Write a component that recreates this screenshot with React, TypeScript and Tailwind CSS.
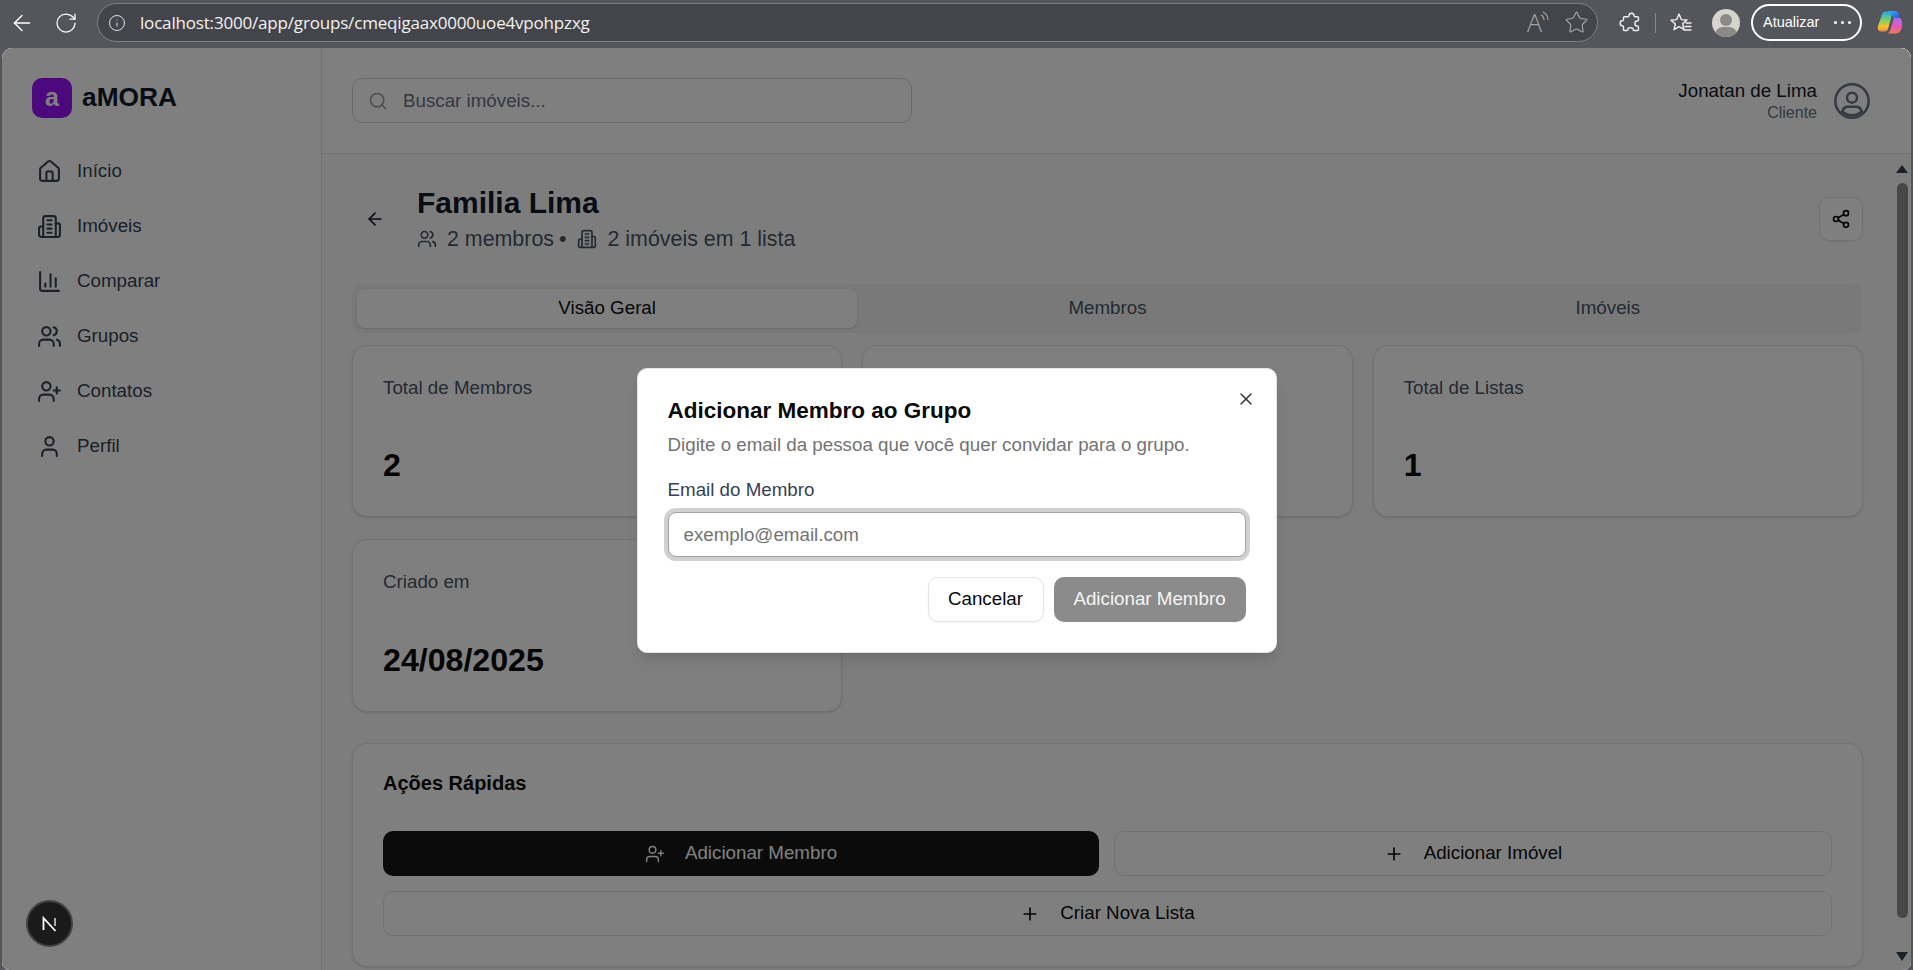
import { ArrowLeft, ChartColumn, House, Info, Plus, RotateCw, Search, Share2, Star, User, UserPlus, Users, X } from 'lucide-react';

const sans = { fontFamily: '"Liberation Sans", Arial, sans-serif' };

const navItems = [
  { label: 'Início', icon: House },
  { label: 'Imóveis', icon: Building },
  { label: 'Comparar', icon: ChartColumn },
  { label: 'Grupos', icon: Users },
  { label: 'Contatos', icon: UserPlus },
  { label: 'Perfil', icon: User },
];

// versao antiga do Building2, com as linhas no meio
function Building({ size = 24, className = '', strokeWidth = 2 }: { size?: number; className?: string; strokeWidth?: number }) {
  return (
    <svg width={size} height={size} viewBox="0 0 24 24" fill="none" stroke="currentColor" strokeWidth={strokeWidth} strokeLinecap="round" strokeLinejoin="round" className={className}>
      <path d="M6 22V4a2 2 0 0 1 2-2h8a2 2 0 0 1 2 2v18Z" />
      <path d="M6 12H4a2 2 0 0 0-2 2v6a2 2 0 0 0 2 2h2" />
      <path d="M18 9h2a2 2 0 0 1 2 2v9a2 2 0 0 1-2 2h-2" />
      <path d="M10 6h4" />
      <path d="M10 10h4" />
      <path d="M10 14h4" />
      <path d="M10 18h4" />
    </svg>
  );
}

function UserCircle() {
  return (
    <svg width="40" height="40" viewBox="0 0 24 24" fill="none" stroke="currentColor" strokeWidth="1.5" strokeLinecap="round" strokeLinejoin="round" className="text-gray-500">
      <circle cx="12" cy="12" r="10" />
      <circle cx="12" cy="10" r="3" />
      <path d="M6.2 18.2c.6-1.8 1.8-2.7 3.3-2.7h5c1.5 0 2.7.9 3.3 2.7" />
      <path d="M6.2 18.2c1.5 1.6 3.5 2.3 5.8 2.3s4.300-.7 5.800-2.300" />
    </svg>
  );
}

function Browser() {
  return (
    <div className="flex h-12 shrink-0 items-center pb-[3px] text-white" style={{ fontFamily: '"Open Sans", sans-serif' }}>
      <ArrowLeft size={26} strokeWidth={1.25} className="ml-[9px]" />
      <RotateCw size={24} strokeWidth={1.25} className="ml-[19px]" />
      <div className="ml-[19px] flex h-[39px] w-[1501px] items-center rounded-full border border-[#7f8085] bg-[#44454a] pl-[10px] pr-[8px]">
        <Info size={18} strokeWidth={1.25} className="text-[#e8e8e8]" />
        <span className="ml-[14px] text-[17px] tracking-[-0.18px] text-[#f2f2f2]">localhost:3000/app/groups/cmeqigaax0000uoe4vpohpzxg</span>
        <span className="ml-auto text-[25px] font-light leading-none text-[#a5a6a9]">A</span>
        <svg width="10" height="14" viewBox="0 0 10 14" fill="none" stroke="#a5a6a9" strokeWidth="1.1" className="mb-[10px] ml-[-2px]">
          <path d="M1 4c2 .8 3 2.500 3 5" />
          <path d="M3 1c3 1.500 5 4 5 8" />
        </svg>
        <Star size={25} strokeWidth={1.1} className="ml-[14px] text-[#a5a6a9]" />
      </div>
      <svg width="24" height="24" viewBox="0 0 24 24" fill="none" stroke="#f0f0f0" strokeWidth="1.4" strokeLinejoin="round" className="ml-[21px]">
        <path d="M10 4.500c0-3 5-3 5 0 0 .7.500 1.200 1.200 1.200h2.300a1 1 0 0 1 1 1v2.300c0 .9-.8 1-1.500 1-2.800 0-2.800 5 0 5 .7 0 1.500.2 1.500 1.100v2.400a1 1 0 0 1-1 1H15c-.9 0-1-.9-1-1.500 0-1.700-5-1.700-5 0 0 .6-.2 1.500-1 1.500H5.500a1 1 0 0 1-1-1v-2.800c0-.8-.8-1-1.400-1-2.600 0-2.600-5 0-5 .6 0 1.400-.2 1.400-1V6.700a1 1 0 0 1 1-1h3.300c.7 0 1.200-.5 1.200-1.200Z" />
      </svg>
      <div className="ml-[12px] h-[20px] w-px bg-[#86878b]" />
      <svg width="24" height="24" viewBox="0 0 24 24" fill="none" stroke="#f0f0f0" strokeWidth="1.4" strokeLinejoin="round" className="ml-[13px]">
        <path d="M10 3l2.300 5.600 5.700.4-4.400 3.700 1.400 5.700L10 15.600l-5 3.100 1.400-5.700L2 9.300l5.700-.7Z" />
        <path d="M17 12h5M16 15.500h6M15 19h7" strokeLinecap="round" />
      </svg>
      <div className="relative ml-[19px] h-[28px] w-[28px] overflow-hidden rounded-full bg-[#d6d4cf]">
        <div className="absolute left-[8px] top-[5px] h-[12px] w-[12px] rounded-full bg-[#8b8a85]" />
        <div className="absolute left-[3px] top-[18px] h-[16px] w-[22px] rounded-full bg-[#8b8a85]" />
      </div>
      <div className="ml-[11px] flex h-[37px] w-[111px] items-center rounded-full border-2 border-white pl-[10px] text-[14.500px]" style={sans}>
        <span>Atualizar</span>
        <span className="ml-[15px] flex gap-[4px]">
          <span className="h-[3px] w-[3px] rounded-full bg-white" />
          <span className="h-[3px] w-[3px] rounded-full bg-white" />
          <span className="h-[3px] w-[3px] rounded-full bg-white" />
        </span>
      </div>
      <svg width="28" height="28" viewBox="0 0 28 28" className="ml-[14px]">
        <defs>
          <linearGradient id="cpA" x1="0" y1="0" x2="1" y2="1">
            <stop offset="0" stopColor="#2fb8f0" />
            <stop offset="1" stopColor="#2a4fd8" />
          </linearGradient>
          <linearGradient id="cpB" x1="0" y1="0" x2="0" y2="1">
            <stop offset="0" stopColor="#2fa0f0" />
            <stop offset="0.4" stopColor="#6fd070" />
            <stop offset="0.75" stopColor="#f4c430" />
            <stop offset="1" stopColor="#f08a3c" />
          </linearGradient>
          <linearGradient id="cpC" x1="0" y1="0" x2="0" y2="1">
            <stop offset="0" stopColor="#a86bf0" />
            <stop offset="0.6" stopColor="#e85ab0" />
            <stop offset="1" stopColor="#f07a50" />
          </linearGradient>
        </defs>
        <path d="M11 2h8c2 0 3 1 3.500 3l1.500 5-6-1-3-3.500C13.500 4 12.500 2.800 11 2Z" fill="url(#cpA)" />
        <path d="M10 2.500c-2 0-3.500 1-4 3L2 17c-1 3 .5 5.500 3.500 5.500H9c1.500 0 2.500-1 3-2.500l3-11 .5-2.500C14.500 4 12.500 2.500 10 2.500Z" fill="url(#cpB)" />
        <path d="M18 9h6.500c2 3 2.500 8 .5 12-1 2-3 3.500-5 3.500h-9c1.500-.5 2.800-1.700 3.300-3.500Z" fill="url(#cpC)" />
      </svg>
    </div>
  );
}

function Sidebar() {
  return (
    <aside className="w-[320px] shrink-0 border-r border-[#e5e5e5] bg-white">
      <div className="ml-[30px] mt-[30px] flex items-center">
        <div className="flex h-[40px] w-[40px] items-center justify-center rounded-[10px] bg-[#9810fa] text-[25px] font-bold text-white">a</div>
        <span className="ml-[10px] text-[26.300px] font-bold text-gray-900">aMORA</span>
      </div>
      <nav className="ml-[20px] mt-[31px] flex flex-col gap-[10px]">
        {navItems.map((item) => (
          <div key={item.label} className="flex h-[45px] items-center px-[15px] text-[18.750px] text-gray-700">
            <item.icon size={25} strokeWidth={2} className="shrink-0" />
            <span className="ml-[15px]">{item.label}</span>
          </div>
        ))}
      </nav>
    </aside>
  );
}

function StatCard({ label, value }: { label: string; value: string }) {
  return (
    <div className="flex flex-col rounded-[15px] border border-[#e5e5e5] bg-white px-[30px] pb-[32px] pt-[30px] shadow-sm">
      <p className="text-[18.750px] leading-[23px] text-gray-600">{label}</p>
      <p className="mt-auto text-[32.150px] font-bold leading-[37px] text-[#0a0a0a]">{value}</p>
    </div>
  );
}

function ActionButton({ children, primary, className = '' }: { children: React.ReactNode; primary?: boolean; className?: string }) {
  return (
    <button
      className={`flex h-[45px] items-center justify-center gap-[20px] rounded-[10px] text-[18.750px] ${
        primary ? 'bg-[#171717] text-white' : 'border border-[#e5e5e5] bg-white text-[#0a0a0a]'
      } ${className}`}
    >
      {children}
    </button>
  );
}

function Content() {
  return (
    <div className="flex min-w-0 flex-1 overflow-hidden">
      <main className="h-[900px] min-w-0 flex-1 px-[30px] pt-[30px]">
        <div className="mb-[30px] flex h-[70px] items-center">
          <ArrowLeft size={20} className="ml-[13px] text-gray-900" />
          <div className="ml-[32px] pb-[2px]">
            <h1 className="text-[30px] font-bold leading-[37px] text-gray-900">Familia Lima</h1>
            <div className="mt-[4px] flex items-center text-[21.400px] leading-[28px] text-gray-600">
              <Users size={20} />
              <span className="ml-[10px]">2 membros</span>
              <span className="ml-[5px]">•</span>
              <Building size={20} className="ml-[10px]" />
              <span className="ml-[11px]">2 imóveis em 1 lista</span>
            </div>
          </div>
          <button className="ml-auto flex h-[44px] w-[44px] items-center justify-center rounded-[10px] border border-[#e5e5e5] bg-white text-[#0a0a0a] shadow-xs">
            <Share2 size={20} />
          </button>
        </div>

        <div className="grid h-[49px] grid-cols-3 rounded-[10px] bg-[#f2f2f2] p-[5px] text-[18.750px]">
          <div className="flex items-center justify-center rounded-[8px] bg-white text-[#0a0a0a] shadow-sm">Visão Geral</div>
          <div className="flex items-center justify-center text-gray-600">Membros</div>
          <div className="flex items-center justify-center text-gray-600">Imóveis</div>
        </div>

        <div className="mt-[12px] grid grid-cols-3 grid-rows-[172px_173px] gap-x-[20px] gap-y-[22px]">
          <StatCard label="Total de Membros" value="2" />
          <StatCard label="Total de Imóveis" value="2" />
          <StatCard label="Total de Listas" value="1" />
          <StatCard label="Criado em" value="24/08/2025" />
        </div>

        <section className="mt-[31px] rounded-[15px] border border-[#e5e5e5] bg-white p-[30px] shadow-sm">
          <h2 className="text-[20px] font-bold leading-[18px] text-[#0a0a0a]">Ações Rápidas</h2>
          <div className="mt-[39px] grid grid-cols-[716px_1fr] gap-[15px]">
            <ActionButton primary>
              <UserPlus size={20} strokeWidth={1.75} />
              Adicionar Membro
            </ActionButton>
            <ActionButton>
              <Plus size={20} />
              Adicionar Imóvel
            </ActionButton>
            <ActionButton className="col-span-2">
              <Plus size={20} />
              Criar Nova Lista
            </ActionButton>
          </div>
        </section>
      </main>
      <div className="flex w-[18px] shrink-0 flex-col items-center pt-[11px]">
        <div className="h-0 w-0 border-x-[6px] border-b-[8px] border-x-transparent border-b-gray-700" />
        <div className="mt-[10px] h-[735px] w-[11px] rounded-full bg-[#8f8f8f]" />
        <div className="mt-[34px] h-0 w-0 border-x-[6px] border-t-[9px] border-x-transparent border-t-gray-700" />
      </div>
    </div>
  );
}

function Modal() {
  return (
    <div className="absolute inset-0 flex items-center justify-center bg-black/50 pt-[3px]">
      <div className="relative w-[640px] rounded-[10px] border border-[#e5e5e5] bg-white p-[30px] shadow-lg">
        <X size={20} strokeWidth={1.75} className="absolute right-[20px] top-[20px] text-[#333]" />
        <h2 className="-mt-[1px] text-[22.500px] font-bold leading-[26px] text-[#0a0a0a]">Adicionar Membro ao Grupo</h2>
        <p className="mt-[9px] text-[18.750px] leading-[24px] text-[#737373]">Digite o email da pessoa que você quer convidar para o grupo.</p>
        <label className="mt-[21px] block text-[18.750px] leading-[24px] text-gray-700">Email do Membro</label>
        <input
          placeholder="exemplo@email.com"
          className="mt-[10px] block h-[45px] w-full rounded-[8px] border border-[#a1a1a1] bg-white px-[15px] text-[18.750px] outline-none ring-[4px] ring-[#d1d1d1] placeholder:text-[#737373]"
          style={sans}
        />
        <div className="mt-[20px] flex justify-end gap-[10px]">
          <button className="h-[45px] w-[116px] rounded-[10px] border border-[#e5e5e5] bg-white text-[18.750px] text-[#0a0a0a] shadow-xs">Cancelar</button>
          <button className="h-[45px] w-[192px] rounded-[10px] bg-[#8b8b8b] text-[18.750px] text-[#f5f5f5]">Adicionar Membro</button>
        </div>
      </div>
    </div>
  );
}

export default function App() {
  return (
    <div className="flex h-[970px] flex-col overflow-hidden bg-[#55565c]" style={sans}>
      <Browser />
      <div className="relative mx-[2px] flex min-h-0 flex-1 overflow-hidden rounded-[10px] rounded-b-[8px] bg-white">
        <Sidebar />
        <div className="flex min-w-0 flex-1 flex-col bg-[#fafafa]">
          <header className="flex h-[106px] shrink-0 items-center border-b border-[#e5e5e5] bg-white pl-[30px] pr-[39px]">
            <div className="flex h-[45px] w-[560px] items-center rounded-[10px] border border-[#d4d4d4] px-[15px]">
              <Search size={20} className="text-gray-400" />
              <span className="ml-[15px] text-[18.750px] leading-[24px] text-gray-500">Buscar imóveis...</span>
            </div>
            <div className="ml-auto flex items-center gap-[15px]">
              <div className="text-right">
                <p className="text-[18.750px] leading-[24px] text-gray-900">Jonatan de Lima</p>
                <p className="text-[16px] leading-[20px] text-gray-500">Cliente</p>
              </div>
              <UserCircle />
            </div>
          </header>
          <Content />
        </div>
        <Modal />
        <div className="absolute left-[24px] top-[852px] flex h-[47px] w-[47px] items-center justify-center rounded-full border-2 border-[#444] bg-[#1a1a1a]">
          <svg width="18" height="18" viewBox="0 0 18 18" fill="none" stroke="white" strokeWidth="1.8">
            <path d="M2.500 15V3l12 13" />
            <path d="M14 3v8" stroke="#bbb" />
          </svg>
        </div>
      </div>
    </div>
  );
}
